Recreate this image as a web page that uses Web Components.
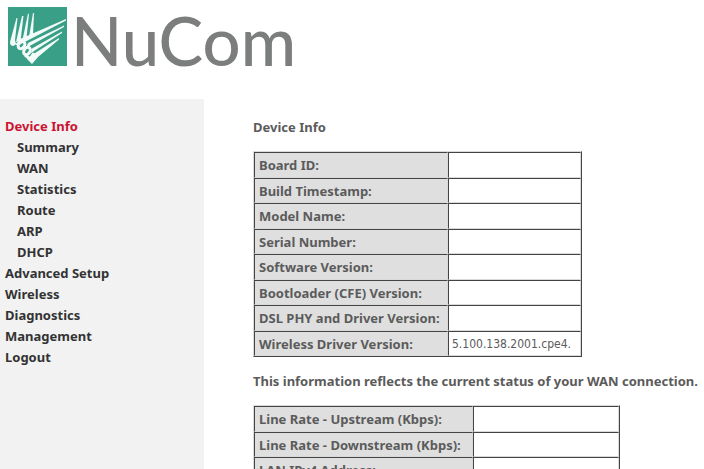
<!DOCTYPE html>
<html lang="en">
<head>
<meta charset="utf-8">
<title>NuCom</title>
<style>
body {
  margin: 0;
  background: #fff;
  color: #5b5b5b;
  font: bold 13px/16px "Noto Sans", sans-serif;
}
</style>
</head>
<body>
<router-page>
  <brand-logo slot="header"></brand-logo>
  <side-menu slot="menu">
    <menu-link active>Device Info</menu-link>
    <menu-link sub>Summary</menu-link>
    <menu-link sub>WAN</menu-link>
    <menu-link sub>Statistics</menu-link>
    <menu-link sub>Route</menu-link>
    <menu-link sub>ARP</menu-link>
    <menu-link sub>DHCP</menu-link>
    <menu-link>Advanced Setup</menu-link>
    <menu-link>Wireless</menu-link>
    <menu-link>Diagnostics</menu-link>
    <menu-link>Management</menu-link>
    <menu-link>Logout</menu-link>
  </side-menu>
  <info-section heading="Device Info">
    <info-table id="device"></info-table>
  </info-section>
  <info-section heading="This information reflects the current status of your WAN connection.">
    <info-table id="wan"></info-table>
  </info-section>
</router-page>

<script>
class RouterPage extends HTMLElement {
  constructor() {
    super()
    this.attachShadow({ mode: "open" }).innerHTML = `
    <style>
    :host {
      display: flex;
      flex-direction: column;
      height: 100vh;
      overflow: hidden;
    }

    header {
      flex: none;
      height: 99px;
    }

    .columns {
      display: flex;
      flex: 1;
      min-height: 0;
    }

    nav {
      flex: none;
      width: 204px;
      background: #f2f2f3;
    }

    main {
      display: flex;
      flex: 1;
      flex-direction: column;
      gap: 16px;
      min-width: 0;
      padding: 20px 0 0 49px;
    }
    </style>
    <header><slot name="header"></slot></header>
    <div class="columns">
      <nav><slot name="menu"></slot></nav>
      <main><slot></slot></main>
    </div>`
  }
}

class BrandLogo extends HTMLElement {
  constructor() {
    super()
    this.attachShadow({ mode: "open" }).innerHTML = `
    <style>
    :host {
      display: flex;
      gap: 4px;
      padding: 7px 8px 0;
      color: #7c7e7d;
      font: 500 67px/66px Lato, sans-serif;
    }

    svg {
      flex: none;
      width: 59px;
      height: 59px;
    }
    </style>
    <svg viewBox="0 0 59 59" aria-hidden="true">
      <rect width="59" height="59" fill="#3a9f87"/>
      <g fill="#f2fbf8">
        <path d="M8.500 11 2 35Q2 39 5.500 39L8 37 7 33 9.500 11Z"/>
        <path d="M14 9 8 35 12.500 34 15.500 9Z"/>
        <path d="M20 6.500 14.500 33 18.500 31 21 7Z"/>
        <path d="M25 6 21 30 25 28 26 6Z"/>
        <path d="M58 12 12 32 7 38 11 38 58 13.500Z"/>
        <path d="M56 18.500 20 36 18 41 56 20Z"/>
        <path d="M54 24.500 24 41.500 23 46 54 26Z"/>
        <path d="M51 31 27 46 19 52 24 57 30 50 51 32.500Z"/>
      </g>
      <g fill="none" stroke="#f2fbf8" stroke-width="3">
        <ellipse cx="13.500" cy="38" rx="3" ry="4" transform="rotate(35 13.500 38)"/>
        <ellipse cx="19" cy="44" rx="3" ry="4" transform="rotate(35 19 44)"/>
        <path d="M17 48 22 52 26 46"/>
      </g>
    </svg>
    <span>NuCom</span>`
  }
}

class SideMenu extends HTMLElement {
  constructor() {
    super()
    this.attachShadow({ mode: "open" }).innerHTML = `
    <style>
    :host {
      display: flex;
      flex-direction: column;
      padding: 17px 5px;
    }
    </style>
    <slot></slot>`
  }
}

class MenuLink extends HTMLElement {
  constructor() {
    super()
    this.attachShadow({ mode: "open" }).innerHTML = `
    <style>
    :host {
      display: block;
      color: #333;
      line-height: 21px;
    }

    :host([sub]) {
      padding-left: 12px;
    }

    :host([active]) {
      color: #cc1230;
    }

    a {
      color: inherit;
      text-decoration: none;
    }
    </style>
    <a href="#"><slot></slot></a>`
  }
}

class InfoSection extends HTMLElement {
  connectedCallback() {
    this.attachShadow({ mode: "open" }).innerHTML = `
    <style>
    :host {
      display: block;
    }

    p {
      margin: 0 0 16px;
      white-space: nowrap;
    }
    </style>
    <p>${this.getAttribute("heading")}</p>
    <slot></slot>`
  }
}

class InfoTable extends HTMLElement {
  constructor() {
    super()
    this.attachShadow({ mode: "open" })
  }

  set data({ rows, labelWidth, valueWidth }) {
    this.shadowRoot.innerHTML = `
    <style>
    :host {
      display: block;
    }

    table {
      box-sizing: border-box;
      border: 1px solid;
      border-color: #d9d9d9 #444 #444 #d9d9d9;
      border-spacing: 0;
      font: inherit;
    }

    th, td {
      box-sizing: border-box;
      height: 25px;
      padding: 0 0 0 4px;
      border: 1px solid;
      border-color: #444 #d9d9d9 #d9d9d9 #444;
      text-align: left;
      white-space: nowrap;
    }

    /* the heights alternate 26 / 25 */
    tr:nth-child(odd) > * {
      height: 26px;
    }

    th {
      width: ${labelWidth}px;
      background: #dfdfdf;
    }

    td {
      width: ${valueWidth}px;
      padding-left: 3px;
      font-family: "DejaVu Sans Condensed", "DejaVu Sans", sans-serif;
      font-size: 12px;
      font-weight: normal;
    }
    </style>
    <table>
      ${rows.map(([label, value]) => `
      <tr>
        <th scope="row">${label}</th>
        <td>${value || ""}</td>
      </tr>`).join("")}
    </table>`
  }
}

customElements.define("router-page", RouterPage)
customElements.define("brand-logo", BrandLogo)
customElements.define("side-menu", SideMenu)
customElements.define("menu-link", MenuLink)
customElements.define("info-section", InfoSection)
customElements.define("info-table", InfoTable)

document.getElementById("device").data = {
  labelWidth: 194,
  valueWidth: 133,
  rows: [
    ["Board ID:"],
    ["Build Timestamp:"],
    ["Model Name:"],
    ["Serial Number:"],
    ["Software Version:"],
    ["Bootloader (CFE) Version:"],
    ["DSL PHY and Driver Version:"],
    ["Wireless Driver Version:", "5.100.138.2001.cpe4."]
  ]
}

document.getElementById("wan").data = {
  labelWidth: 219,
  valueWidth: 146,
  rows: [
    ["Line Rate - Upstream (Kbps):"],
    ["Line Rate - Downstream (Kbps):"],
    ["LAN IPv4 Address:"]
  ]
}
</script>
</body>
</html>
